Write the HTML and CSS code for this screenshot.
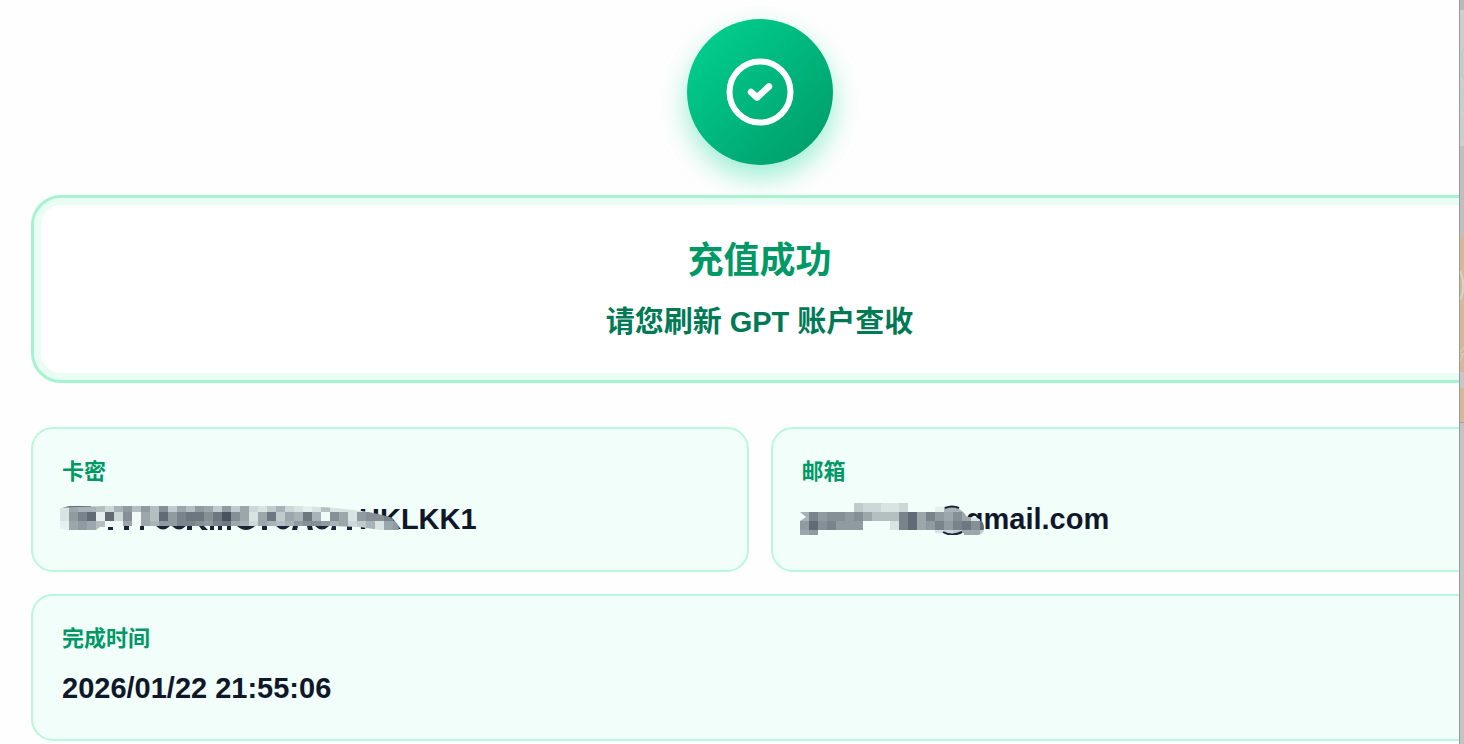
FILE: index.html
```html
<!DOCTYPE html>
<html lang="zh-CN">
  <head>
    <meta charset="UTF-8" />
    <meta name="viewport" content="width=device-width, initial-scale=1.0" />
    <title>充值成功</title>
    <link rel="stylesheet" href="styles.css">
  </head>
  <body>
    <main class="dialog">
      <div class="dialog-content">
        <!-- Success icon -->
        <div class="success-icon">
          <svg width="68" height="68" viewBox="-34 -34 68 68" fill="none" stroke="#fff" stroke-width="6" stroke-linecap="round" stroke-linejoin="round">
            <circle cx="0" cy="0" r="30.5" />
            <path d="M-9 0L-3 5.5L9 -5.5" stroke-width="6.5" />
          </svg>
        </div>

        <!-- Result message -->
        <section class="result">
          <h1>充值成功</h1>
          <p>请您刷新 GPT 账户查收</p>
        </section>

        <!-- Order details -->
        <dl class="details">
          <div class="detail">
            <dt>卡密</dt>
            <dd>
              <svg class="mask mask-code" viewBox="0 0 339 32" aria-hidden="true">
                <defs>
                  <clipPath id="codeShape">
                    <path d="M0 5L42 3H240Q300 5 330 14Q339 20 339 27H320L300 24L270 23H60V24H40L36 27H8L0 26Z" />
                  </clipPath>
                </defs>
                <path fill="#1c2238" d="M48 23h5v4h-5zM64 23h5v4h-5zM80 23h4v4h-4zM96 23h14q-7 7-14 0zM112 23h14q-7 7-14 0zM127 23h5v4h-5zM139 23h5l4 4h-6zM150 23h4v4h-4zM158 23h4v4h-4zM167 23h4v4h-4zM177 23h18q-9 8-18 0zM202 23h5v4h-5zM216 23h14q-7 7-14 0zM233 23h5l-1 4h-5zM247 23h5l1 4h-5zM255 23h14q-7 7-14 0zM272 23h4v4h-5zM287 23h5v4h-5z" />
                <path fill="#656d78" d="M2 5L9 3H31V4Z" />
                <g clip-path="url(#codeShape)" data-rows="d899ac97a7a6b8a78b7b8cdb9cdedadddddddd d753e3c6f8a3754464168d84b8949f68d7665168 e878aff8f897755675489c89a9766798cb9d878"></g>
              </svg>
              <span>HKLKK1</span>
            </dd>
          </div>
          <div class="detail">
            <dt>邮箱</dt>
            <dd>
              <svg class="mask mask-email" viewBox="0 0 184 32" aria-hidden="true">
                <defs>
                  <clipPath id="emailShape">
                    <path d="M0 9H54V0H108V9H135V4H155Q163 7 167 14Q184 13 184 25Q184 31 178 32H164V30H135V27H18V32H0V18L6 14Z" />
                  </clipPath>
                </defs>
                <g clip-path="url(#emailShape)" data-rows="......bccddc...e998d.. 95766768aaa53857868d... 7365777...d538757546373 87.............dcb88b8"></g>
                <path fill="none" stroke="#1c2238" stroke-width="2" d="M145 5Q152 2 159 5M143 29Q152 34 162 29" />
              </svg>
              <span>@gmail.com</span>
            </dd>
          </div>
          <div class="detail detail-wide">
            <dt>完成时间</dt>
            <dd>2026/01/22 21:55:06</dd>
          </div>
        </dl>
      </div>
    </main>

    <!-- Dimmed page behind the dialog -->
    <aside class="backdrop" aria-hidden="true">
      <svg width="4" height="744" viewBox="0 0 4 744">
        <rect width="4" height="10" fill="#b9b9b9" />
        <rect y="10" width="4" height="136" fill="#cecece" />
        <rect y="146" width="4" height="89" fill="#bfbfbf" />
        <rect y="235" width="4" height="137" fill="#d3b899" />
        <rect y="372" width="4" height="16" fill="#c6c6c6" />
        <rect y="388" width="4" height="34" fill="#d3b899" />
        <rect y="422" width="4" height="1" fill="#a0a0a0" />
        <g fill="none" stroke="#b0cabf">
          <path d="M4 48Q2 49 2 53V73Q2 78 4 79" />
          <path d="M4 88Q2 89 2 92V106Q2 110 4 111" opacity=".5" />
          <path d="M4 116Q2 117 2 120V134Q2 138 4 139" opacity=".5" />
        </g>
        <path d="M0 271Q7 286 0 300" fill="none" stroke="#d5d3d0" stroke-width="2" />
        <path d="M4 347L0 352M0 354H4M3 355L0 361" stroke="#d5d3d0" />
      </svg>
    </aside>

    <script>
      const CELL = 9; // Size of one mosaic block
      const SVG_NS = "http://www.w3.org/2000/svg";

      // Each hex digit is a shade from dark (0) to light (f), a dot is empty
      document.querySelectorAll("[data-rows]").forEach((group) => {
        group.dataset.rows.split(" ").forEach((row, y) => {
          [...row].forEach((shade, x) => {
            if (shade === ".") return;
            const level = parseInt(shade, 16);
            const rect = document.createElementNS(SVG_NS, "rect");
            rect.setAttribute("x", x * CELL);
            rect.setAttribute("y", y * CELL);
            rect.setAttribute("width", CELL);
            rect.setAttribute("height", CELL);
            rect.setAttribute(
              "fill",
              `rgb(${60 + level * 12}, ${71 + level * 12}, ${84 + level * 11})`
            );
            group.appendChild(rect);
          });
        });
      });
    </script>
  </body>
</html>
```
FILE: styles.css
```css
* {
  margin: 0;
  padding: 0;
  box-sizing: border-box;
}

body {
  display: flex;
  min-height: 100vh;
  overflow: hidden;
  font-family: "Liberation Sans", "Noto Sans CJK SC", sans-serif;
  background-color: #c4c4c4;
  color: #0f172a;
}

/* Dialog panel, its content runs past the right edge */
.dialog {
  flex: 1;
  min-width: 0;
  overflow: hidden;
  background-color: #fefefe;
}

.dialog-content {
  width: calc(100% + 60px);
  padding: 19px 31px 5px;
}

.success-icon {
  display: flex;
  align-items: center;
  justify-content: center;
  width: 146px;
  height: 146px;
  margin: 0 auto 30px;
  border-radius: 50%;
  background: linear-gradient(135deg, #00d492, #009966);
  box-shadow: 0 12px 28px rgba(0, 212, 146, 0.4);
}

/* Result message */
.result {
  margin-bottom: 44px;
  padding: 36px;
  border: 3px solid #a4f4cf;
  border-radius: 30px;
  background-color: #fff;
  box-shadow: inset 0 0 0 7px #eafdf5;
  text-align: center;
}

.result h1 {
  margin-bottom: 12px;
  font-size: 36px;
  font-weight: 700;
  line-height: 54px;
  color: #009966;
}

.result p {
  font-size: 29px;
  font-weight: 600;
  line-height: 44px;
  color: #007a55;
}

/* Order details */
.details {
  display: grid;
  grid-template-columns: 1fr 1fr;
  gap: 22px;
}

.detail {
  padding: 27px 29px 30px;
  border: 2px solid #b9f8da;
  border-radius: 22px;
  background-color: #f2fefa;
}

.detail-wide {
  grid-column: span 2;
}

.detail dt {
  margin-bottom: 10px;
  font-size: 22px;
  font-weight: 600;
  line-height: 32px;
  color: #009966;
}

.detail-wide dt {
  margin-bottom: 12px;
}

.detail dd {
  display: flex;
  align-items: center;
  font-size: 29px;
  font-weight: 700;
  line-height: 42px;
}

/* Mosaic over the private part of a value */
.mask {
  position: relative;
  flex: none;
  height: 32px;
  margin-left: -2px;
}

.mask-code {
  width: 339px;
  margin-right: -40px;
}

.mask-email {
  width: 184px;
  margin-right: -46px;
}

.backdrop {
  flex: none;
  width: 5px;
  border-left: 1px solid #999;
}

.backdrop svg {
  display: block;
}
```
